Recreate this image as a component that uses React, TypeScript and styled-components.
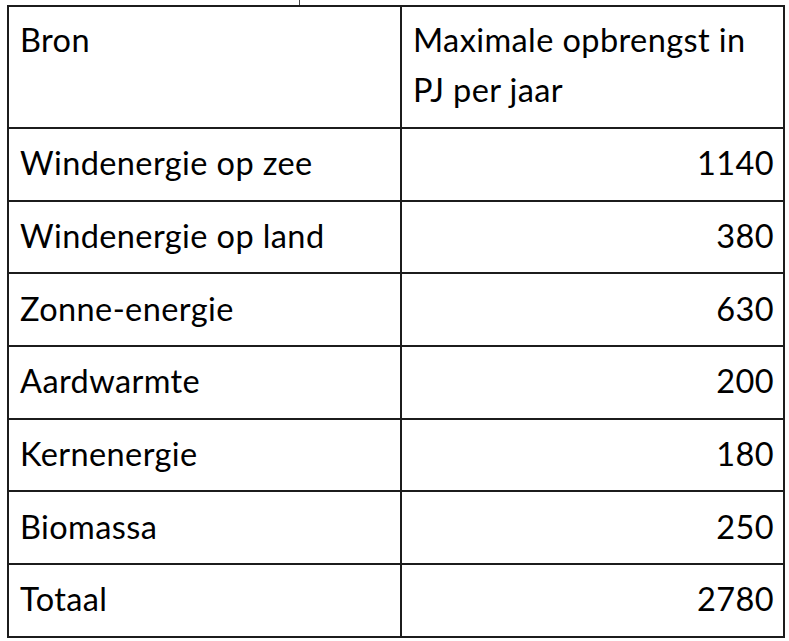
import styled, { createGlobalStyle } from "styled-components";

const GlobalStyle = createGlobalStyle`
  html, body {
    margin: 0;
    padding: 0;
    background: #fff;
  }
`;

const Page = styled.div`
  width: 789px;
  height: 641px;
  padding-left: 7px;
  box-sizing: border-box;
  font-family: Lato, "Open Sans", sans-serif;
  color: #000;
`;

const TopMark = styled.div`
  height: 5px;
  margin-left: 292px;
  width: 1px;
  background: #444;
`;

const Table = styled.table`
  border-collapse: collapse;
  width: 776px;
  table-layout: fixed;
`;

const Row = styled.tr<{ header?: boolean }>`
  height: ${(props) => (props.header ? "122px" : "72.7px")};
`;

const Cell = styled.td<{ align?: "left" | "right"; header?: boolean }>`
  border: 2px solid #1c1c1c;
  padding: ${(props) => (props.header ? "8px 10px 0 11px" : "0 9px 2px 11px")};
  vertical-align: ${(props) => (props.header ? "top" : "middle")};
  text-align: ${(props) => props.align || "left"};
  font-size: 32.5px;
  line-height: ${(props) => (props.header ? "50px" : "48px")};
  font-weight: 400;
  letter-spacing: 0.4px;
`;

const rows: [string, string][] = [
  ["Windenergie op zee", "1140"],
  ["Windenergie op land", "380"],
  ["Zonne-energie", "630"],
  ["Aardwarmte", "200"],
  ["Kernenergie", "180"],
  ["Biomassa", "250"],
  ["Totaal", "2780"],
];

const App = () => {
  return (
    <Page>
      <GlobalStyle />
      <TopMark />
      <Table>
        <colgroup>
          <col style={{ width: "393px" }} />
          <col style={{ width: "383px" }} />
        </colgroup>
        <tbody>
          <Row header>
            <Cell header>Bron</Cell>
            <Cell header>Maximale opbrengst in PJ per jaar</Cell>
          </Row>
          {rows.map(([name, value]) => (
            <Row key={name}>
              <Cell>{name}</Cell>
              <Cell align="right">{value}</Cell>
            </Row>
          ))}
        </tbody>
      </Table>
    </Page>
  );
};

export default App;
